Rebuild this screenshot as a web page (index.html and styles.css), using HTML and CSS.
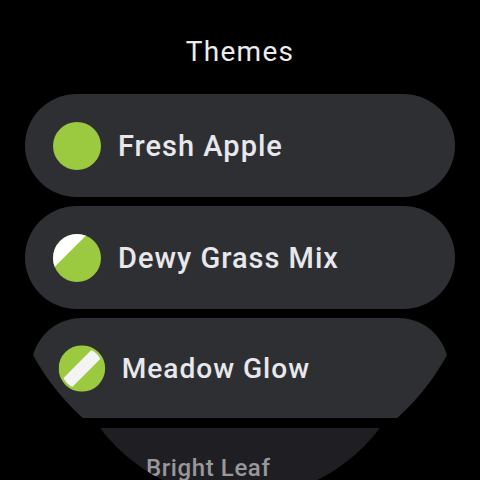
FILE: index.html
```html
<!DOCTYPE html>
<html lang="en">
<head>
  <meta charset="UTF-8">
  <title>Themes</title>
  <link rel="stylesheet" href="styles.css">
</head>
<body>
  <div class="screen">
    <h1 class="title">Themes</h1>

    <ul class="themes">
      <li class="theme">
        <svg class="swatch" viewBox="0 0 48 48" width="48" height="48">
          <circle cx="24" cy="24" r="24" fill="#9bc93f"/>
        </svg>
        <span class="theme-name">Fresh Apple</span>
      </li>

      <li class="theme">
        <svg class="swatch" viewBox="0 0 48 48" width="48" height="48">
          <defs>
            <clipPath id="dewyClip"><circle cx="24" cy="24" r="24"/></clipPath>
          </defs>
          <circle cx="24" cy="24" r="24" fill="#9bc93f"/>
          <polygon points="0,0 34.5,0 0,34.5" fill="#ffffff" clip-path="url(#dewyClip)"/>
        </svg>
        <span class="theme-name">Dewy Grass Mix</span>
      </li>

      <li class="theme theme-near-edge">
        <svg class="swatch" viewBox="0 0 48 48" width="48" height="48">
          <defs>
            <clipPath id="meadowClip"><circle cx="24" cy="24" r="21.5"/></clipPath>
          </defs>
          <circle cx="24" cy="24" r="24" fill="#9bc93f"/>
          <line x1="0" y1="48" x2="48" y2="0" stroke="#f4f4f4" stroke-width="13" clip-path="url(#meadowClip)"/>
        </svg>
        <span class="theme-name">Meadow Glow</span>
      </li>

      <li class="theme theme-edge">
        <svg class="swatch" viewBox="0 0 48 48" width="40" height="40">
          <circle cx="24" cy="24" r="24" fill="#6f8f35"/>
        </svg>
        <span class="theme-name">Bright Leaf</span>
      </li>
    </ul>
  </div>
</body>
</html>
```

FILE: styles.css
```css
body {
  margin: 0;
  background: #000;
  font-family: Roboto, "Noto Sans", sans-serif;
}

.screen {
  width: 480px;
  height: 480px;
  overflow: hidden;
  background: #000;
}

.title {
  margin: 0 0 24px;
  padding-top: 34px;
  text-align: center;
  font-size: 28px;
  line-height: 36px;
  font-weight: 400;
  letter-spacing: 1.3px;
  color: #ececec;
}

.themes {
  list-style: none;
  margin: 0;
  padding: 0 25px;
  display: flex;
  flex-direction: column;
  gap: 9px;
}

.theme {
  flex-shrink: 0;
  height: 103px;
  border-radius: 52px;
  background: #2e2f33;
  color: #e8e8ec;
  display: flex;
  align-items: center;
  gap: 17px;
  padding-left: 28px;
}

.swatch {
  flex-shrink: 0;
  display: block;
}

.theme-name {
  font-size: 29px;
  font-weight: 500;
  letter-spacing: 1px;
  white-space: nowrap;
}

/* items shrink and get cut by the round edge near the bottom */
.theme-near-edge {
  transform: scale(0.97);
  transform-origin: top center;
  clip-path: circle(243px at 215px -78px);
}

.theme-edge {
  margin-top: -2px;
  height: 80px;
  border-radius: 0;
  padding-left: 67px;
  gap: 14px;
  background: #1f1f23;
  color: #98989c;
  clip-path: circle(175px at 215px -105px);
}

.theme-edge .swatch {
  visibility: hidden;
}

.theme-edge .theme-name {
  font-size: 24px;
  font-weight: 500;
  letter-spacing: 0.6px;
}
```
